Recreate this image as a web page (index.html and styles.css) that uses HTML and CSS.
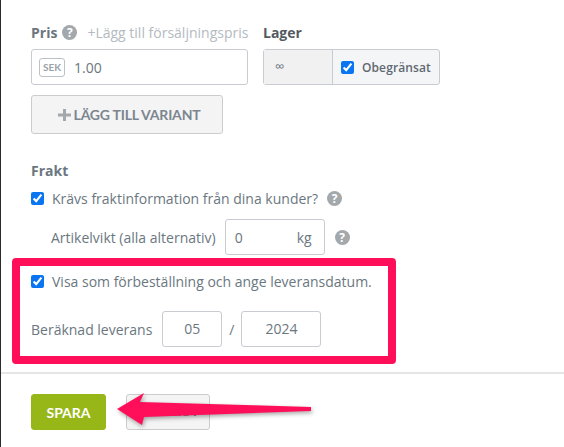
FILE: index.html
```html
<!DOCTYPE html>
<html lang="sv">
<head>
  <meta charset="UTF-8">
  <meta name="viewport" content="width=device-width, initial-scale=1.0">
  <title>Produkt</title>
  <link rel="stylesheet" href="styles.css">
</head>
<body>
  <div class="page">
    <div class="form">
      <div class="stock-row">
        <div class="price">
          <div class="label-row">
            <span class="label">Pris</span>
            <span class="help">?</span>
            <span class="sale-link">+Lägg till försäljningspris</span>
          </div>
          <div class="price-input">
            <span class="currency">SEK</span>
            <span class="value">1.00</span>
          </div>
        </div>
        <div class="stock">
          <div class="label-row"><span class="label dark">Lager</span></div>
          <div class="stock-input">
            <span class="stock-value">∞</span>
            <label class="stock-check">
              <input type="checkbox" checked>
              <span>Obegränsat</span>
            </label>
          </div>
        </div>
      </div>
      <button class="btn variant">
        <svg class="plus" width="13" height="12" viewBox="0 0 13 12"><path d="M5 0h3v4.500h5v3H8V12H5V7.500H0v-3h5z" fill="#a3a8ac"/></svg>
        LÄGG TILL VARIANT
      </button>

      <div class="label shipping-title">Frakt</div>
      <label class="check-row">
        <input type="checkbox" checked>
        <span>Krävs fraktinformation från dina kunder?</span>
        <span class="help help-ship">?</span>
      </label>
      <div class="weight-row">
        <span>Artikelvikt (alla alternativ)</span>
        <div class="weight-input"><span>0</span><span class="unit">kg</span></div>
        <span class="help help-weight">?</span>
      </div>
    </div>

    <div class="highlight">
      <label class="check-row first">
        <input type="checkbox" checked>
        <span>Visa som förbeställning och ange leveransdatum.</span>
      </label>
      <div class="date-row">
        <span>Beräknad leverans</span>
        <div class="date-box month">05</div>
        <span class="slash">/</span>
        <div class="date-box year">2024</div>
      </div>
    </div>

    <div class="footer">
      <button class="btn save">SPARA</button>
      <button class="btn cancel">RADERA</button>
    </div>

    <svg class="arrow" width="210" height="44" viewBox="0 0 210 44">
      <path d="M5 19 L32 3 L28 12 L199 17 L199 21 L32 27 L30 35 Z" fill="#ff0f5a"/>
    </svg>
  </div>
</body>
</html>
```

FILE: styles.css
```css
* {
  box-sizing: border-box;
}
body {
  margin: 0;
  background-color: #ffffff;
  font-family: "Open Sans", sans-serif;
  font-size: 14px;
  color: #6b7780;
}
.page {
  position: relative;
  height: 447px;
  border-left: 1px solid #2b2b2b;
  overflow: hidden;
}
.form {
  padding: 22px 0 0 30px;
}
.stock-row {
  display: flex;
  gap: 15px;
}
.price {
  width: 217px;
}
.label-row {
  display: flex;
  align-items: center;
  height: 20px;
  margin-bottom: 7px;
  white-space: nowrap;
}
.label {
  font-weight: 700;
  font-size: 14px;
  color: #6b7780;
}
.label.dark {
  color: #555b61;
}
.help {
  display: inline-block;
  flex: none;
  width: 15px;
  height: 15px;
  margin-left: 5px;
  border-radius: 50%;
  background-color: #a3a8ac;
  color: #ffffff;
  font-size: 12px;
  font-weight: 700;
  line-height: 15px;
  text-align: center;
}
.sale-link {
  margin-left: 10px;
  color: #b4bac0;
  font-size: 14px;
}
.price-input {
  display: flex;
  align-items: center;
  height: 36px;
  padding-left: 7px;
  border: 1px solid #c8ccd0;
  border-radius: 3px;
}
.currency {
  width: 26px;
  height: 19px;
  border: 1px solid #bcc1c6;
  border-radius: 3px;
  color: #9ba2a8;
  font-family: "Lato", sans-serif;
  font-size: 10px;
  font-weight: 700;
  line-height: 17px;
  text-align: center;
}
.value {
  margin-left: 9px;
  font-size: 14px;
}
.stock-input {
  display: flex;
  width: 177px;
  height: 36px;
  border: 1px solid #c8ccd0;
  border-radius: 3px;
  background-color: #f4f5f7;
}
.stock-value {
  width: 69px;
  padding-left: 11px;
  border-right: 1px solid #c8ccd0;
  background-color: #f1f1f2;
  font-size: 13px;
  line-height: 33px;
}
.stock-check {
  display: flex;
  align-items: center;
  padding-left: 8px;
  color: #5f6870;
  font-size: 12px;
  font-weight: 600;
  letter-spacing: 0.1px;
}
.stock-check input {
  margin: 0 8px 0 0;
}
input[type="checkbox"] {
  flex: none;
  width: 13px;
  height: 13px;
  margin: 0 8px 0 0;
  accent-color: #0a75f0;
}
.btn {
  border: 1px solid #cccccc;
  border-radius: 3px;
  background-color: #f4f4f4;
  font-family: "Lato", sans-serif;
  font-weight: 700;
}
.variant {
  display: flex;
  align-items: center;
  justify-content: center;
  gap: 3px;
  width: 192px;
  height: 39px;
  margin-top: 10px;
  padding: 0 0 0 4px;
  color: #7b8690;
  font-size: 14px;
  letter-spacing: -0.2px;
}
.shipping-title {
  height: 20px;
  margin-top: 27px;
}
.check-row {
  display: flex;
  align-items: center;
  height: 20px;
  margin-top: 7px;
  white-space: nowrap;
}
.help-ship {
  margin-left: 9px;
}
.weight-row {
  display: flex;
  align-items: center;
  height: 36px;
  margin-top: 11px;
  padding-left: 20px;
}
.weight-input {
  display: flex;
  justify-content: space-between;
  align-items: center;
  width: 100px;
  height: 36px;
  margin-left: 9px;
  padding: 0 12px 0 9px;
  border: 1px solid #c8ccd0;
  border-radius: 3px;
}
.help-weight {
  margin-left: 10px;
}
.highlight {
  width: 384px;
  height: 106px;
  margin: 3px 0 0 11px;
  padding: 5px 0 0 11px;
  border: 8px solid #ff0f5a;
  border-radius: 4px;
}
.check-row.first {
  margin-top: 0;
}
.date-row {
  display: flex;
  align-items: center;
  height: 36px;
  margin-top: 20px;
}
.date-box {
  height: 36px;
  margin-left: 10px;
  border: 1px solid #c8ccd0;
  border-radius: 3px;
  line-height: 34px;
  text-align: center;
}
.month {
  width: 60px;
}
.slash {
  margin-left: 7px;
}
.year {
  width: 80px;
  margin-left: 7px;
}
.footer {
  display: flex;
  gap: 20px;
  margin-top: 8px;
  padding: 20px 0 0 30px;
  border-top: 2px solid #e6e6e6;
}
.save {
  width: 75px;
  height: 36px;
  border-color: #97b719;
  background-color: #97b719;
  color: #ffffff;
  font-size: 14px;
}
.cancel {
  width: 84px;
  height: 36px;
  padding-bottom: 4px;
  color: #7b8690;
  font-size: 14px;
}
.arrow {
  position: absolute;
  left: 111px;
  top: 390px;
  filter: drop-shadow(1px 2px 2px rgba(0, 0, 0, 0.35));
}
```
